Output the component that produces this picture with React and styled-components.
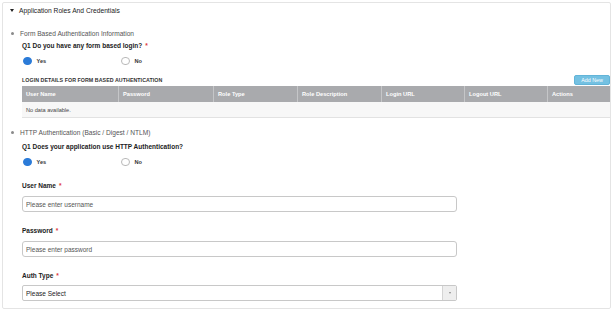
import React from "react";
import styled, { createGlobalStyle } from "styled-components";

const GlobalStyle = createGlobalStyle`
  body {
    margin: 0;
    background: #ffffff;
    font-family: "Liberation Sans", Arial, sans-serif;
    color: #222;
  }
`;

const Panel = styled.section`
  box-sizing: border-box;
  margin: 2px 0 0 2px;
  width: 609px;
  height: 307px;
  border: 1px solid #e4e4e4;
  border-radius: 2px;
`;

const Header = styled.div`
  display: flex;
  align-items: center;
  height: 14px;
  padding-left: 7px;
  gap: 5px;
  font-size: 6.7px;
  color: #222;
`;

const Caret = styled.span`
  width: 0;
  height: 0;
  border-left: 2.5px solid transparent;
  border-right: 2.5px solid transparent;
  border-top: 3px solid #222;
`;

const SectionTitle = styled.div`
  display: flex;
  align-items: center;
  gap: 6px;
  height: 10px;
  margin-top: ${(p) => p.$mt}px;
  padding-left: 8px;
  font-size: 6.6px;
  color: #555;

  &::before {
    content: "";
    width: 3px;
    height: 3px;
    border-radius: 50%;
    background: #8a8a8a;
  }
`;

const Question = styled.div`
  height: 10px;
  line-height: 10px;
  margin-top: ${(p) => p.$mt}px;
  padding-left: 19px;
  font-size: 6.5px;
  font-weight: bold;
  color: #222;
`;

const Required = styled.span`
  color: #e0393e;
  margin-left: 3px;
  font-weight: bold;
`;

const RadioRow = styled.div`
  display: flex;
  height: 10px;
  margin-top: 5px;
  padding-left: 20px;
`;

const RadioOption = styled.label`
  display: flex;
  align-items: center;
  gap: 5px;
  width: 98px;
  font-size: 5.6px;
  font-weight: bold;
  color: #333;
`;

const RadioDot = styled.span`
  box-sizing: border-box;
  width: 8.5px;
  height: 8.5px;
  border-radius: 50%;
  background: ${(p) => (p.$checked ? "#2b7bd8" : "#fff")};
  border: 1px solid ${(p) => (p.$checked ? "#2b7bd8" : "#b9b9b9")};
`;

const TableBar = styled.div`
  display: flex;
  align-items: center;
  justify-content: space-between;
  height: 10px;
  margin-top: 9px;
  padding-left: 19px;
`;

const TableTitle = styled.div`
  font-size: 5.3px;
  font-weight: bold;
  color: #333;
  letter-spacing: 0.05px;
`;

const AddButton = styled.button`
  box-sizing: border-box;
  width: 36px;
  height: 10px;
  padding: 0;
  border: 1px solid #62b4d8;
  border-radius: 2px;
  background: #74c1e2;
  color: #fff;
  font-family: "Liberation Sans", Arial, sans-serif;
  font-size: 5.3px;
`;

const Table = styled.div`
  margin: 1px 0 0 19px;
  width: 588px;
`;

const HeadRow = styled.div`
  display: grid;
  grid-template-columns: 96px 95px 84px 84px 83px 83px 63px;
  height: 16px;
  background: #a9aaad;
`;

const HeadCell = styled.div`
  display: flex;
  align-items: center;
  padding-left: 4px;
  font-size: 5.7px;
  font-weight: bold;
  color: #fff;
  border-left: ${(p) => (p.$first ? "none" : "1px solid #c5c6c8")};
`;

const EmptyRow = styled.div`
  box-sizing: border-box;
  display: flex;
  align-items: center;
  height: 16px;
  padding-left: 4px;
  background: #f7f7f7;
  border-bottom: 1px solid #e2e2e2;
  font-size: 5.6px;
  color: #444;
`;

const FieldLabel = styled.div`
  height: 10px;
  line-height: 10px;
  margin-top: 14px;
  padding-left: 19px;
  font-size: 6.5px;
  font-weight: bold;
  color: #222;
`;

const TextInput = styled.input`
  display: block;
  box-sizing: border-box;
  width: 435px;
  height: 16px;
  margin: 5px 0 0 19px;
  padding: 0 3px;
  border: 1px solid #c8c8c8;
  border-radius: 3px;
  font-family: "Liberation Sans", Arial, sans-serif;
  font-size: 6.5px;
  color: #333;
  outline: none;

  &::placeholder {
    color: #555;
  }
`;

const SelectBox = styled.div`
  display: flex;
  box-sizing: border-box;
  width: 435px;
  height: 16px;
  margin: 4px 0 0 19px;
  border: 1px solid #c8c8c8;
  border-radius: 2px;
  font-size: 6.5px;
  color: #222;
`;

const SelectText = styled.span`
  flex: 1;
  display: flex;
  align-items: center;
  padding-left: 3px;
`;

const SelectArrow = styled.span`
  display: flex;
  align-items: center;
  justify-content: center;
  width: 13px;
  background: #eeeeee;
  border-left: 1px solid #d4d4d4;

  &::after {
    content: "";
    border-left: 1.5px solid transparent;
    border-right: 1.5px solid transparent;
    border-top: 2px solid #888;
  }
`;

const columns = [
  "User Name",
  "Password",
  "Role Type",
  "Role Description",
  "Login URL",
  "Logout URL",
  "Actions",
];

function YesNo() {
  return (
    <RadioRow>
      <RadioOption>
        <RadioDot $checked />
        Yes
      </RadioOption>
      <RadioOption>
        <RadioDot />
        No
      </RadioOption>
    </RadioRow>
  );
}

export default function App() {
  return (
    <>
      <GlobalStyle />
      <Panel>
        <Header>
          <Caret />
          Application Roles And Credentials
        </Header>

        <SectionTitle $mt={11}>Form Based Authentication Information</SectionTitle>
        <Question $mt={3}>
          Q1 Do you have any form based login?<Required>*</Required>
        </Question>
        <YesNo />

        <TableBar>
          <TableTitle>LOGIN DETAILS FOR FORM BASED AUTHENTICATION</TableTitle>
          <AddButton>Add New</AddButton>
        </TableBar>
        <Table>
          <HeadRow>
            {columns.map((c, i) => (
              <HeadCell key={c} $first={i === 0}>
                {c}
              </HeadCell>
            ))}
          </HeadRow>
          <EmptyRow>No data available.</EmptyRow>
        </Table>

        <SectionTitle $mt={9}>HTTP Authentication (Basic / Digest / NTLM)</SectionTitle>
        <Question $mt={5}>Q1 Does your application use HTTP Authentication?</Question>
        <YesNo />

        <FieldLabel>
          User Name<Required>*</Required>
        </FieldLabel>
        <TextInput placeholder="Please enter username" />

        <FieldLabel>
          Password<Required>*</Required>
        </FieldLabel>
        <TextInput type="password" placeholder="Please enter password" />

        <FieldLabel>
          Auth Type<Required>*</Required>
        </FieldLabel>
        <SelectBox>
          <SelectText>Please Select</SelectText>
          <SelectArrow />
        </SelectBox>
      </Panel>
    </>
  );
}
